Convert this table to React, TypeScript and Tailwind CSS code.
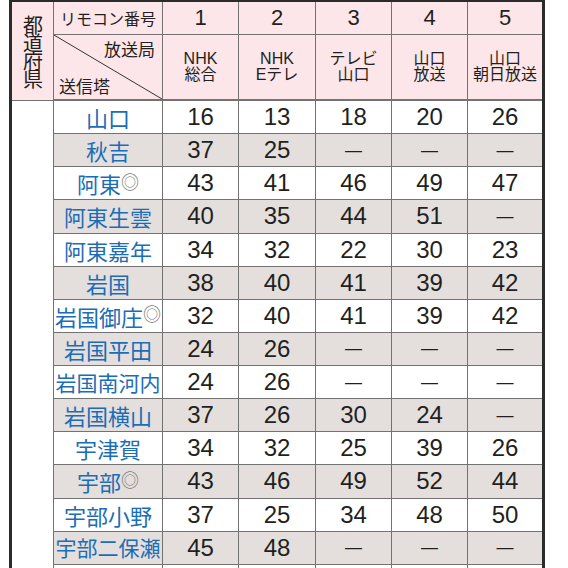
const NUM_FONT = "font-['Liberation_Sans','Noto_Sans_CJK_JP',sans-serif]";
const JP_FONT = "font-['Noto_Sans_CJK_JP',sans-serif]";

type Row = { name: string; mark?: boolean; ch: (number | null)[] };

const ROWS: Row[] = [
  { name: "山口", ch: [16, 13, 18, 20, 26] },
  { name: "秋吉", ch: [37, 25, null, null, null] },
  { name: "阿東", mark: true, ch: [43, 41, 46, 49, 47] },
  { name: "阿東生雲", ch: [40, 35, 44, 51, null] },
  { name: "阿東嘉年", ch: [34, 32, 22, 30, 23] },
  { name: "岩国", ch: [38, 40, 41, 39, 42] },
  { name: "岩国御庄", mark: true, ch: [32, 40, 41, 39, 42] },
  { name: "岩国平田", ch: [24, 26, null, null, null] },
  { name: "岩国南河内", ch: [24, 26, null, null, null] },
  { name: "岩国横山", ch: [37, 26, 30, 24, null] },
  { name: "宇津賀", ch: [34, 32, 25, 39, 26] },
  { name: "宇部", mark: true, ch: [43, 46, 49, 52, 44] },
  { name: "宇部小野", ch: [37, 25, 34, 48, 50] },
  { name: "宇部二保瀬", ch: [45, 48, null, null, null] },
];

const STATIONS: string[][] = [
  ["NHK", "総合"],
  ["NHK", "Eテレ"],
  ["テレビ", "山口"],
  ["山口", "放送"],
  ["山口", "朝日放送"],
];

function ValueCell({ value, shaded }: { value: number | null; shaded: boolean }) {
  return (
    <div
      className={`flex items-center justify-center ${shaded ? "bg-[#e4dfdd]" : "bg-white"} ${NUM_FONT} text-[24px] leading-none text-[#231f20]`}
    >
      {value === null ? <span className="text-[17px]">—</span> : value}
    </div>
  );
}

export default function App() {
  return (
    <div className="h-[568px] w-[568px] overflow-hidden bg-white">
      <div className="ml-[9px] grid w-[536px] grid-cols-[41px_108px_75px_76px_75px_75px_74px] grid-rows-[32px_65px_repeat(15,32.14px)] gap-px border-x-[3px] border-t-2 border-[#2b2b2b] bg-[#727272]">
        {/* prefecture header */}
        <div
          className={`row-span-2 flex items-center justify-center bg-[#fde6ea] ${JP_FONT} text-[20px] leading-none text-[#231f20]`}
        >
          <span className="tracking-[-2px] [text-orientation:upright] [writing-mode:vertical-rl]">都道府県</span>
        </div>
        <div
          className={`flex items-center justify-center bg-[#fde6ea] ${JP_FONT} text-[16px] leading-none text-[#231f20]`}
        >
          リモコン番号
        </div>
        {[1, 2, 3, 4, 5].map((n) => (
          <div
            key={n}
            className={`flex items-center justify-center bg-[#fde6ea] ${NUM_FONT} text-[22px] leading-none text-[#231f20]`}
          >
            {n}
          </div>
        ))}

        {/* diagonal header cell */}
        <div className={`relative border-b border-[#727272] bg-[#fde6ea] ${JP_FONT} text-[17px] leading-none text-[#231f20]`}>
          <svg className="absolute inset-0 h-full w-full" preserveAspectRatio="none" viewBox="0 0 100 100">
            <line x1="0" y1="0" x2="100" y2="100" stroke="#333" strokeWidth="1" vectorEffect="non-scaling-stroke" />
          </svg>
          <div className="flex h-full flex-col justify-between px-[5px] pb-[5px] pt-[5px]">
            <span className="self-end pr-[2px]">放送局</span>
            <span className="self-start">送信塔</span>
          </div>
        </div>
        {STATIONS.map((lines, i) => (
          <div
            key={i}
            className={`flex flex-col items-center justify-center border-b border-[#727272] bg-[#fde6ea] ${NUM_FONT} text-[16px] leading-[16px] text-[#231f20]`}
          >
            {lines.map((l) => (
              <span key={l}>{l}</span>
            ))}
          </div>
        ))}

        {/* prefecture body cell */}
        <div className="row-span-15 bg-white" />

        {ROWS.map((row, i) => {
          const shaded = i % 2 === 1;
          const long = row.name.length >= 5;
          return [
            <div
              key={`n${i}`}
              className={`flex items-center justify-center ${shaded ? "bg-[#e4dfdd]" : "bg-white"} ${JP_FONT} ${long ? "text-[21px]" : "text-[22px]"} leading-none text-[#1b6db5]`}
            >
              <span>{row.name}</span>
              {row.mark && (
                <span className="mb-[5px] text-[18px] leading-none text-[#7a7a7a]">◎</span>
              )}
            </div>,
            ...row.ch.map((v, j) => <ValueCell key={`v${i}-${j}`} value={v} shaded={shaded} />),
          ];
        })}

        {/* next row, cut off by the window */}
        {Array.from({ length: 6 }).map((_, j) => (
          <div key={`e${j}`} className="bg-white" />
        ))}
      </div>
    </div>
  );
}
